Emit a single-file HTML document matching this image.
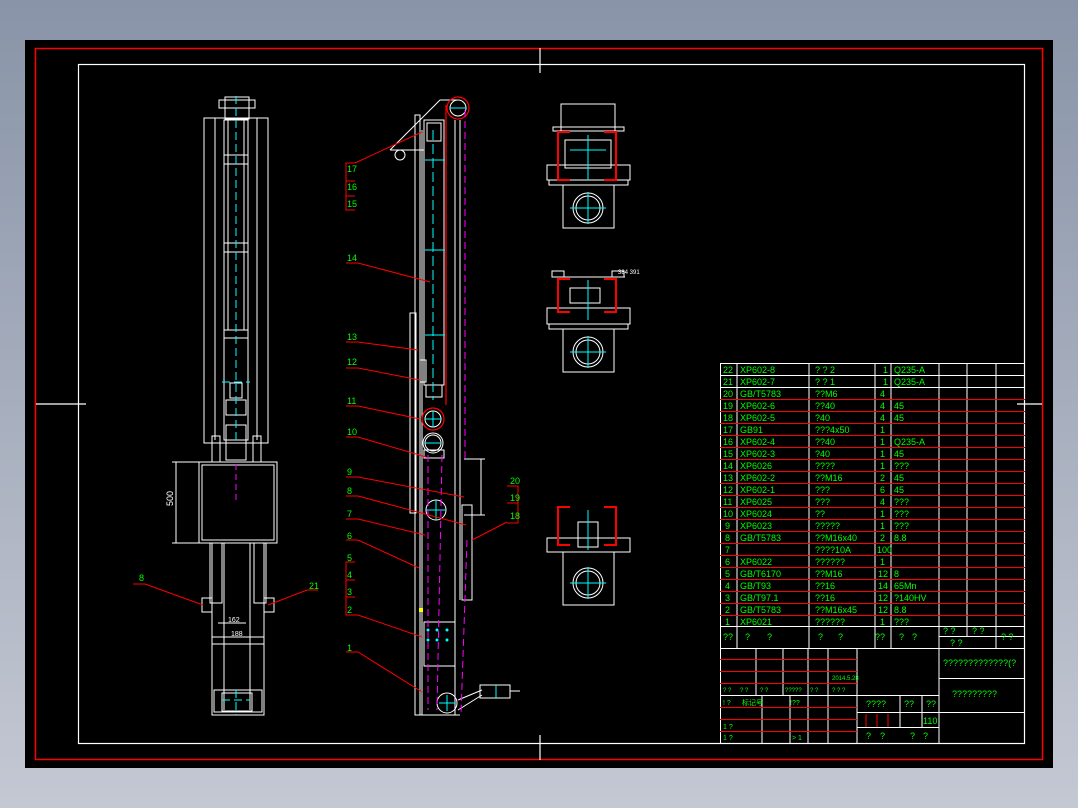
<!DOCTYPE html>
<html><head><meta charset="utf-8"><style>
html,body{margin:0;padding:0;}
body{width:1078px;height:808px;background:linear-gradient(#8994a8,#c4c8d3);overflow:hidden;position:relative;}
svg{position:absolute;left:0;top:0;}
text{font-family:"Liberation Sans","Noto Sans CJK SC",sans-serif;fill:#00ff00;font-size:9px;}
</style></head><body>
<svg width="1078" height="808" viewBox="0 0 1078 808">
<rect x="25" y="40" width="1028" height="728" fill="#000"/>
<rect x="35.5" y="48.5" width="1007" height="711" fill="none" stroke="#f00" stroke-width="1.5"/>
<rect x="78.5" y="64.5" width="946" height="679" fill="none" stroke="#fff" stroke-width="1.2"/>
<g stroke="#fff" stroke-width="1.2">
<line x1="540" y1="48" x2="540" y2="73"/><line x1="540" y1="735" x2="540" y2="760"/>
<line x1="36" y1="404" x2="86" y2="404"/><line x1="1017" y1="404" x2="1042" y2="404"/>
</g>

<!-- LEFT VIEW -->
<g fill="none" stroke="#fff" stroke-width="1">
<rect x="225" y="97" width="24" height="22"/><rect x="219" y="100" width="36" height="8"/>
<rect x="204" y="118" width="64" height="325"/>
<line x1="215" y1="118" x2="215" y2="440"/><line x1="257" y1="118" x2="257" y2="440"/>
<rect x="224" y="120" width="24" height="320"/>
<line x1="228" y1="120" x2="228" y2="330"/><line x1="244" y1="120" x2="244" y2="330"/>
<rect x="224" y="155" width="24" height="9"/><rect x="224" y="243" width="24" height="9"/>
<rect x="224" y="330" width="24" height="8"/><rect x="230" y="383" width="12" height="15"/>
<rect x="226" y="400" width="20" height="15"/><rect x="226" y="425" width="20" height="35"/>
<rect x="212" y="436" width="8" height="26"/><rect x="253" y="436" width="8" height="26"/>
<rect x="199" y="462" width="78" height="81"/><rect x="202" y="465" width="72" height="75"/>
<line x1="172" y1="462" x2="199" y2="462"/><line x1="172" y1="543" x2="199" y2="543"/>
<line x1="176" y1="462" x2="176" y2="543"/>
<rect x="210" y="543" width="12" height="60"/><rect x="254" y="543" width="12" height="60"/>
<rect x="202" y="598" width="10" height="14"/><rect x="264" y="598" width="10" height="14"/>
<rect x="212" y="543" width="52" height="172"/>
<line x1="224" y1="543" x2="224" y2="710"/><line x1="250" y1="543" x2="250" y2="710"/>
<line x1="212" y1="637" x2="264" y2="637"/><line x1="212" y1="644" x2="264" y2="644"/>
<rect x="214" y="690" width="48" height="22"/><rect x="222" y="693" width="30" height="18"/>
<line x1="218" y1="623" x2="246" y2="623"/>
</g>
<g stroke="#0ff" stroke-width="1" stroke-dasharray="8,4" fill="none">
<line x1="236" y1="96" x2="236" y2="440"/><line x1="236" y1="690" x2="236" y2="715"/>
<line x1="222" y1="700" x2="250" y2="700"/><line x1="222" y1="382" x2="250" y2="382"/>
</g>
<line x1="236" y1="464" x2="236" y2="500" stroke="#f0f" stroke-dasharray="6,4"/>
<g stroke="#f00" fill="none"><polyline points="133,584 145,584 203,605"/><polyline points="318,590 307,590 268,605"/></g>
<text x="139" y="581">8</text><text x="309" y="589">21</text>
<text x="173" y="506" transform="rotate(-90 173 506)" fill="#fff" style="fill:#fff">500</text>
<text x="228" y="622" style="fill:#fff;font-size:7px">162</text><text x="231" y="636" style="fill:#fff;font-size:7px">188</text>

<!-- MIDDLE VIEW -->
<g fill="none" stroke="#fff" stroke-width="1">
<polyline points="390,150 440,100 458,100"/><line x1="390" y1="150" x2="424" y2="150"/>
<circle cx="400" cy="155" r="5"/>
<rect x="415" y="115" width="5" height="600"/>
<line x1="422" y1="130" x2="422" y2="715"/>
<rect x="424" y="120" width="20" height="265"/>
<rect x="427" y="123" width="14" height="18"/>
<line x1="455" y1="120" x2="455" y2="715"/><line x1="460" y1="120" x2="460" y2="600"/>
<rect x="410" y="313" width="6" height="200"/>
<rect x="420" y="360" width="6" height="22"/>
<rect x="426" y="385" width="16" height="12"/>
<rect x="424" y="450" width="20" height="8"/>
<circle cx="433" cy="443" r="10"/>
<polyline points="464,459 485,459"/><line x1="481" y1="459" x2="481" y2="515"/><line x1="464" y1="515" x2="485" y2="515"/>
<rect x="462" y="505" width="10" height="95"/>
<rect x="424" y="622" width="31" height="44"/>
<rect x="480" y="685" width="30" height="13"/><line x1="510" y1="691" x2="520" y2="691"/>
<line x1="458" y1="700" x2="482" y2="690"/><line x1="458" y1="710" x2="482" y2="695"/>
<line x1="418" y1="715" x2="460" y2="715"/>
</g>
<g fill="none" stroke="#f00" stroke-width="1.2">
<circle cx="458" cy="108" r="11"/><circle cx="433" cy="419" r="11"/>
<line x1="446" y1="105" x2="446" y2="405"/>
</g>
<g fill="none" stroke="#fff"><circle cx="458" cy="108" r="8"/><circle cx="433" cy="419" r="8"/><circle cx="433" cy="443" r="8"/><circle cx="436" cy="510" r="10"/><circle cx="447" cy="703" r="10"/></g>
<g stroke="#0ff" fill="none">
<line x1="433" y1="130" x2="433" y2="400" stroke-dasharray="10,4"/>
<line x1="425" y1="160" x2="445" y2="160"/><line x1="425" y1="250" x2="445" y2="250"/><line x1="425" y1="335" x2="445" y2="335"/>
<line x1="425" y1="419" x2="441" y2="419"/><line x1="433" y1="411" x2="433" y2="427"/>
<line x1="425" y1="443" x2="441" y2="443"/><line x1="426" y1="510" x2="446" y2="510"/><line x1="436" y1="500" x2="436" y2="520"/>
<line x1="450" y1="108" x2="466" y2="108"/><line x1="447" y1="695" x2="447" y2="711"/><line x1="439" y1="703" x2="455" y2="703"/>
<line x1="496" y1="685" x2="496" y2="698"/>
</g>
<g fill="#0ff"><circle cx="428" cy="630" r="1.5"/><circle cx="437" cy="630" r="1.5"/><circle cx="447" cy="630" r="1.5"/><circle cx="428" cy="640" r="1.5"/><circle cx="437" cy="640" r="1.5"/><circle cx="447" cy="640" r="1.5"/></g>
<g stroke="#f0f" stroke-dasharray="7,4" fill="none">
<polyline points="465,110 465,459"/><line x1="428" y1="455" x2="428" y2="710"/><line x1="442" y1="455" x2="437" y2="710"/><line x1="467" y1="540" x2="461" y2="715"/>
</g>
<rect x="419" y="608" width="4" height="4" fill="#ff0"/>
<g stroke="#f00" fill="none">
<polyline points="355,163 346,163 346,210 355,210"/><line x1="346" y1="181" x2="355" y2="181"/><line x1="346" y1="196" x2="355" y2="196"/>
<polyline points="355,163 422,132"/>
<polyline points="346,263 358,263 430,282"/><polyline points="346,342 358,342 418,350"/>
<polyline points="346,368 358,368 420,380"/><polyline points="346,406 358,406 420,419"/>
<polyline points="346,437 358,437 426,457"/><polyline points="346,477 358,477 464,497"/>
<polyline points="346,496 358,496 466,525"/><polyline points="346,519 358,519 425,535"/>
<polyline points="346,540 358,540 419,568"/>
<polyline points="355,562 346,562 346,615 355,615"/><line x1="346" y1="580" x2="355" y2="580"/><line x1="346" y1="597" x2="355" y2="597"/>
<polyline points="346,615 358,615 422,637"/><polyline points="346,652 358,652 422,692"/>
<polyline points="507,486 518,486 518,523 507,523"/><line x1="507" y1="503" x2="518" y2="503"/>
<polyline points="507,522 472,540"/>
</g>
<g style="font-size:8px">
<text x="347" y="172">17</text><text x="347" y="190">16</text><text x="347" y="207">15</text>
<text x="347" y="261">14</text><text x="347" y="340">13</text><text x="347" y="365">12</text>
<text x="347" y="404">11</text><text x="347" y="435">10</text><text x="347" y="475">9</text>
<text x="347" y="494">8</text><text x="347" y="517">7</text><text x="347" y="539">6</text>
<text x="347" y="561">5</text><text x="347" y="578">4</text><text x="347" y="595">3</text><text x="347" y="613">2</text><text x="347" y="651">1</text>
<text x="510" y="484">20</text><text x="510" y="501">19</text><text x="510" y="519">18</text>
</g>

<!-- RIGHT VIEWS -->
<g fill="none" stroke="#fff">
<rect x="561" y="104" width="54" height="27"/><rect x="553" y="127" width="71" height="4"/>
<rect x="547" y="165" width="83" height="15"/><rect x="549" y="180" width="79" height="5"/>
<rect x="563" y="185" width="51" height="43"/><circle cx="588" cy="208" r="15"/><circle cx="588" cy="208" r="12"/>
<rect x="565" y="140" width="46" height="28"/>
<rect x="552" y="271" width="12" height="6"/><rect x="612" y="271" width="12" height="6"/>
<line x1="552" y1="277" x2="625" y2="277"/>
<rect x="547" y="308" width="83" height="16"/><rect x="549" y="324" width="79" height="5"/>
<rect x="563" y="329" width="51" height="43"/><circle cx="588" cy="352" r="15"/><circle cx="588" cy="352" r="12"/>
<rect x="570" y="288" width="30" height="15"/>
<rect x="547" y="538" width="83" height="14"/>
<rect x="563" y="552" width="51" height="53"/><circle cx="588" cy="583" r="15"/><circle cx="588" cy="583" r="12"/>
<rect x="578" y="522" width="20" height="25"/>
</g>
<g fill="none" stroke="#f00" stroke-width="2">
<polyline points="570,132 558,132 558,180 570,180"/><polyline points="604,132 616,132 616,180 604,180"/>
<polyline points="570,279 558,279 558,312 570,312"/><polyline points="604,279 616,279 616,312 604,312"/>
<polyline points="570,507 558,507 558,545 570,545"/><polyline points="604,507 616,507 616,545 604,545"/>
</g>
<g stroke="#0ff" fill="none">
<line x1="588" y1="135" x2="588" y2="180"/><line x1="570" y1="150" x2="606" y2="150"/><line x1="570" y1="208" x2="606" y2="208"/><line x1="588" y1="192" x2="588" y2="224"/>
<line x1="588" y1="280" x2="588" y2="320"/><line x1="570" y1="352" x2="606" y2="352"/><line x1="588" y1="336" x2="588" y2="368"/>
<line x1="588" y1="510" x2="588" y2="550"/><line x1="570" y1="583" x2="606" y2="583"/><line x1="588" y1="567" x2="588" y2="599"/>
</g>
<text x="618" y="274" style="fill:#fff;font-size:6px">384 391</text>

<!-- TABLE -->
<g stroke="#fff" stroke-width="1" fill="none">
<rect x="720.5" y="363.5" width="304" height="380"/>
<line x1="737" y1="363" x2="737" y2="649"/><line x1="809" y1="363" x2="809" y2="649"/>
<line x1="875" y1="363" x2="875" y2="649"/><line x1="891" y1="363" x2="891" y2="649"/>
<line x1="939" y1="363" x2="939" y2="743"/><line x1="967" y1="363" x2="967" y2="636"/><line x1="996" y1="363" x2="996" y2="649"/>
<line x1="720" y1="375.5" x2="1025" y2="375.5"/><line x1="720" y1="387.5" x2="1025" y2="387.5"/>
<line x1="720" y1="626.5" x2="1025" y2="626.5"/><line x1="720" y1="648.5" x2="1025" y2="648.5"/>
<line x1="939" y1="636.5" x2="1025" y2="636.5"/>
<line x1="756" y1="649" x2="756" y2="695"/><line x1="783" y1="649" x2="783" y2="695"/><line x1="828" y1="649" x2="828" y2="743"/>
<line x1="857" y1="649" x2="857" y2="743"/><line x1="808" y1="649" x2="808" y2="743"/>
<line x1="720" y1="695.5" x2="939" y2="695.5"/>
<line x1="762" y1="695" x2="762" y2="743"/><line x1="790" y1="695" x2="790" y2="743"/>
<line x1="857" y1="712.5" x2="939" y2="712.5"/><line x1="857" y1="727.5" x2="939" y2="727.5"/>
<line x1="900" y1="695" x2="900" y2="727"/><line x1="922" y1="695" x2="922" y2="727"/>
<line x1="939" y1="678.5" x2="1025" y2="678.5"/><line x1="939" y1="712.5" x2="1025" y2="712.5"/>
</g>
<g stroke="#f00" stroke-width="1">
<line x1="720" y1="399.5" x2="1025" y2="399.5"/><line x1="720" y1="411.5" x2="1025" y2="411.5"/>
<line x1="720" y1="423.5" x2="1025" y2="423.5"/><line x1="720" y1="435.5" x2="1025" y2="435.5"/>
<line x1="720" y1="447.5" x2="1025" y2="447.5"/><line x1="720" y1="459.5" x2="1025" y2="459.5"/>
<line x1="720" y1="471.5" x2="1025" y2="471.5"/><line x1="720" y1="483.5" x2="1025" y2="483.5"/>
<line x1="720" y1="495.5" x2="1025" y2="495.5"/><line x1="720" y1="507.5" x2="1025" y2="507.5"/>
<line x1="720" y1="519.5" x2="1025" y2="519.5"/><line x1="720" y1="531.5" x2="1025" y2="531.5"/>
<line x1="720" y1="543.5" x2="1025" y2="543.5"/><line x1="720" y1="555.5" x2="1025" y2="555.5"/>
<line x1="720" y1="567.5" x2="1025" y2="567.5"/><line x1="720" y1="579.5" x2="1025" y2="579.5"/>
<line x1="720" y1="591.5" x2="1025" y2="591.5"/><line x1="720" y1="603.5" x2="1025" y2="603.5"/>
<line x1="720" y1="615.5" x2="1025" y2="615.5"/>
<line x1="720" y1="659.5" x2="857" y2="659.5"/><line x1="720" y1="671.5" x2="857" y2="671.5"/><line x1="720" y1="683.5" x2="857" y2="683.5"/>
<line x1="720" y1="707.5" x2="857" y2="707.5"/><line x1="720" y1="719.5" x2="857" y2="719.5"/><line x1="720" y1="731.5" x2="857" y2="731.5"/>
<line x1="866" y1="714" x2="866" y2="727"/><line x1="877" y1="714" x2="877" y2="727"/><line x1="888" y1="714" x2="888" y2="727"/>
</g>
<g style="font-size:9px">
<text x="723" y="373">22</text><text x="740" y="373">XP602-8</text><text x="815" y="373">? ? 2</text><text x="883" y="373">1</text><text x="894" y="373">Q235-A</text>
<text x="723" y="385">21</text><text x="740" y="385">XP602-7</text><text x="815" y="385">? ? 1</text><text x="883" y="385">1</text><text x="894" y="385">Q235-A</text>
<text x="723" y="397">20</text><text x="740" y="397">GB/T5783</text><text x="815" y="397">??M6</text><text x="880" y="397">4</text>
<text x="723" y="409">19</text><text x="740" y="409">XP602-6</text><text x="815" y="409">??40</text><text x="880" y="409">4</text><text x="894" y="409">45</text>
<text x="723" y="421">18</text><text x="740" y="421">XP602-5</text><text x="815" y="421">?40</text><text x="880" y="421">4</text><text x="894" y="421">45</text>
<text x="723" y="433">17</text><text x="740" y="433">GB91</text><text x="815" y="433">???4x50</text><text x="880" y="433">1</text>
<text x="723" y="445">16</text><text x="740" y="445">XP602-4</text><text x="815" y="445">??40</text><text x="880" y="445">1</text><text x="894" y="445">Q235-A</text>
<text x="723" y="457">15</text><text x="740" y="457">XP602-3</text><text x="815" y="457">?40</text><text x="880" y="457">1</text><text x="894" y="457">45</text>
<text x="723" y="469">14</text><text x="740" y="469">XP6026</text><text x="815" y="469">????</text><text x="880" y="469">1</text><text x="894" y="469">???</text>
<text x="723" y="481">13</text><text x="740" y="481">XP602-2</text><text x="815" y="481">??M16</text><text x="880" y="481">2</text><text x="894" y="481">45</text>
<text x="723" y="493">12</text><text x="740" y="493">XP602-1</text><text x="815" y="493">???</text><text x="880" y="493">6</text><text x="894" y="493">45</text>
<text x="723" y="505">11</text><text x="740" y="505">XP6025</text><text x="815" y="505">???</text><text x="880" y="505">4</text><text x="894" y="505">???</text>
<text x="723" y="517">10</text><text x="740" y="517">XP6024</text><text x="815" y="517">??</text><text x="880" y="517">1</text><text x="894" y="517">???</text>
<text x="725" y="529">9</text><text x="740" y="529">XP6023</text><text x="815" y="529">?????</text><text x="880" y="529">1</text><text x="894" y="529">???</text>
<text x="725" y="541">8</text><text x="740" y="541">GB/T5783</text><text x="815" y="541">??M16x40</text><text x="880" y="541">2</text><text x="894" y="541">8.8</text>
<text x="725" y="553">7</text><text x="815" y="553">????10A</text><text x="877" y="553">100</text>
<text x="725" y="565">6</text><text x="740" y="565">XP6022</text><text x="815" y="565">??????</text><text x="880" y="565">1</text>
<text x="725" y="577">5</text><text x="740" y="577">GB/T6170</text><text x="815" y="577">??M16</text><text x="878" y="577">12</text><text x="894" y="577">8</text>
<text x="725" y="589">4</text><text x="740" y="589">GB/T93</text><text x="815" y="589">??16</text><text x="878" y="589">14</text><text x="894" y="589">65Mn</text>
<text x="725" y="601">3</text><text x="740" y="601">GB/T97.1</text><text x="815" y="601">??16</text><text x="878" y="601">12</text><text x="894" y="601">?140HV</text>
<text x="725" y="613">2</text><text x="740" y="613">GB/T5783</text><text x="815" y="613">??M16x45</text><text x="878" y="613">12</text><text x="894" y="613">8.8</text>
<text x="725" y="625">1</text><text x="740" y="625">XP6021</text><text x="815" y="625">??????</text><text x="880" y="625">1</text><text x="894" y="625">???</text>
<text x="723" y="640">??</text><text x="745" y="640">?</text><text x="767" y="640">?</text><text x="818" y="640">?</text><text x="838" y="640">?</text>
<text x="875" y="640">??</text><text x="899" y="640">?</text><text x="912" y="640">?</text>
<text x="943" y="634">? ?</text><text x="972" y="634">? ?</text><text x="1001" y="640">? ?</text><text x="950" y="646">? ?</text>
<text x="943" y="666">?????????????(?</text><text x="952" y="697">?????????</text>
<text x="723" y="692" style="font-size:6px">? ?</text><text x="740" y="692" style="font-size:6px">? ?</text><text x="760" y="692" style="font-size:6px">? ?</text><text x="785" y="692" style="font-size:6px">?????</text><text x="810" y="692" style="font-size:6px">? ?</text><text x="832" y="692" style="font-size:6px">? ? ?</text>
<text x="832" y="680" style="font-size:6px">2014.5.28</text>
<text x="723" y="705" style="font-size:7px">! ?</text><text x="742" y="705" style="font-size:7px">标记号</text><text x="790" y="705" style="font-size:7px">!??</text>
<text x="866" y="707">????</text><text x="904" y="707">??</text><text x="926" y="707">??</text>
<text x="923" y="724" style="fill:#0f0">110</text>
<text x="723" y="729" style="font-size:7px">1 ?</text><text x="723" y="740" style="font-size:7px">1 ?</text><text x="792" y="740" style="font-size:7px">&gt; 1</text>
<text x="866" y="739">?</text><text x="880" y="739">?</text><text x="910" y="739">?</text><text x="923" y="739">?</text>
</g>
</svg>
</body></html>
